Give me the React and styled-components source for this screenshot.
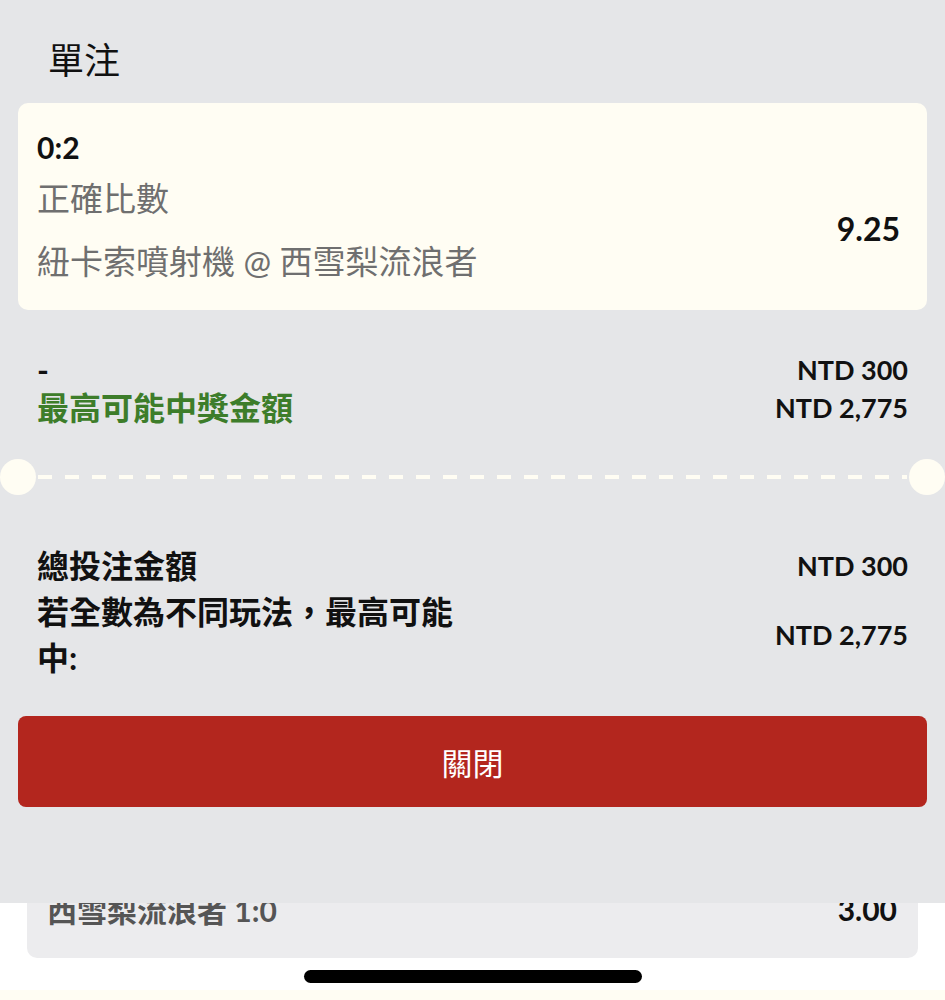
import styled, { createGlobalStyle } from "styled-components";

const GlobalStyle = createGlobalStyle`
  html, body {
    margin: 0;
    padding: 0;
  }
  body {
    font-family: "Lato", "Noto Sans CJK TC", sans-serif;
    background: #ffffff;
  }
`;

const Page = styled.div`
  position: relative;
  width: 945px;
  height: 1000px;
  overflow: hidden;
  background: #ffffff;
  display: flex;
  flex-direction: column;
`;

const Behind = styled.div`
  display: flex;
  flex-direction: column;
  align-items: center;
  padding-top: 858px;
`;

const BehindCard = styled.div`
  width: 891px;
  height: 100px;
  box-sizing: border-box;
  background: #ececee;
  border-radius: 10px;
  display: flex;
  justify-content: space-between;
  align-items: center;
  padding: 0 21px 0 20px;
  margin-bottom: 12px;
`;

const BehindName = styled.span`
  font-size: 30px;
  font-weight: 700;
  color: #555;
  margin-top: 2px;
`;

const BehindOdds = styled.span`
  font-size: 30px;
  font-weight: 700;
  color: #111;
  margin-top: 2px;
`;

const HomeBar = styled.div`
  width: 338px;
  height: 13px;
  border-radius: 7px;
  background: #000;
`;

const BottomStrip = styled.div`
  margin-top: 7px;
  width: 100%;
  height: 12px;
  background: #fffdf3;
`;

const Sheet = styled.div`
  position: absolute;
  top: 0;
  left: 0;
  right: 0;
  height: 903px;
  background: #e5e6e8;
  padding: 0 18px;
  box-sizing: border-box;
  display: flex;
  flex-direction: column;
`;

const Title = styled.h1`
  margin: 42px 0 25px 30px;
  font-size: 36px;
  line-height: 36px;
  font-weight: 400;
  color: #111;
`;

const BetCard = styled.div`
  background: #fffdf3;
  border-radius: 10px;
  padding: 26px 27px 29px 19px;
  display: flex;
  align-items: center;
  justify-content: space-between;
`;

const BetInfo = styled.div`
  display: flex;
  flex-direction: column;
`;

const Score = styled.div`
  font-size: 30px;
  line-height: 36px;
  font-weight: 700;
  color: #111;
`;

const SubLine = styled.div`
  font-size: 33px;
  line-height: 40px;
  color: #6f6f6f;
  margin-top: ${(p) => p.$gap}px;
`;

const Odds = styled.div`
  font-size: 32px;
  font-weight: 700;
  color: #111;
  margin-top: 46px;
`;

const Summary = styled.div`
  display: flex;
  flex-direction: column;
  padding: 0 19px;
  margin-top: ${(p) => p.$top}px;
`;

const Row = styled.div`
  display: flex;
  justify-content: space-between;
  align-items: center;
`;

const Label = styled.div`
  font-size: 32px;
  line-height: ${(p) => p.$lh}px;
  font-weight: 700;
  color: ${(p) => (p.$green ? "#3d7d2a" : "#111")};
  max-width: 440px;
`;

const Value = styled.div`
  font-size: 27px;
  line-height: ${(p) => p.$lh}px;
  font-weight: 700;
  color: #111;
  white-space: nowrap;
`;

const Divider = styled.div`
  margin: 32px -18px 0;
  height: 36px;
  display: flex;
  align-items: center;
`;

const Notch = styled.div`
  width: 36px;
  height: 36px;
  border-radius: 50%;
  background: #fffdf3;
  flex-shrink: 0;
`;

const Dashes = styled.div`
  flex: 1;
  height: 4px;
  margin: 0 2px;
  background: repeating-linear-gradient(
    to right,
    #fffdf3 0 14px,
    transparent 14px 27px
  );
`;

const CloseButton = styled.button`
  margin-top: 35px;
  height: 91px;
  border: none;
  border-radius: 8px;
  background: #b3261e;
  color: #fff;
  font-family: inherit;
  font-size: 31px;
  cursor: pointer;
`;

export default function App() {
  return (
    <>
      <GlobalStyle />
      <Page>
        <Behind>
          <BehindCard>
            <BehindName>西雪梨流浪者 1:0</BehindName>
            <BehindOdds>3.00</BehindOdds>
          </BehindCard>
          <HomeBar />
          <BottomStrip />
        </Behind>

        <Sheet>
          <Title>單注</Title>
          <BetCard>
            <BetInfo>
              <Score>0:2</Score>
              <SubLine $gap={13}>正確比數</SubLine>
              <SubLine $gap={23}>紐卡索噴射機 @ 西雪梨流浪者</SubLine>
            </BetInfo>
            <Odds>9.25</Odds>
          </BetCard>

          <Summary $top={41}>
            <Row>
              <Label $lh={38}>-</Label>
              <Value $lh={38}>NTD 300</Value>
            </Row>
            <Row>
              <Label $lh={38} $green>最高可能中獎金額</Label>
              <Value $lh={38}>NTD 2,775</Value>
            </Row>
          </Summary>

          <Divider>
            <Notch />
            <Dashes />
            <Notch />
          </Divider>

          <Summary $top={48}>
            <Row>
              <Label $lh={46}>總投注金額</Label>
              <Value $lh={46}>NTD 300</Value>
            </Row>
            <Row>
              <Label $lh={46}>若全數為不同玩法，最高可能中:</Label>
              <Value $lh={46}>NTD 2,775</Value>
            </Row>
          </Summary>

          <CloseButton>關閉</CloseButton>
        </Sheet>
      </Page>
    </>
  );
}
